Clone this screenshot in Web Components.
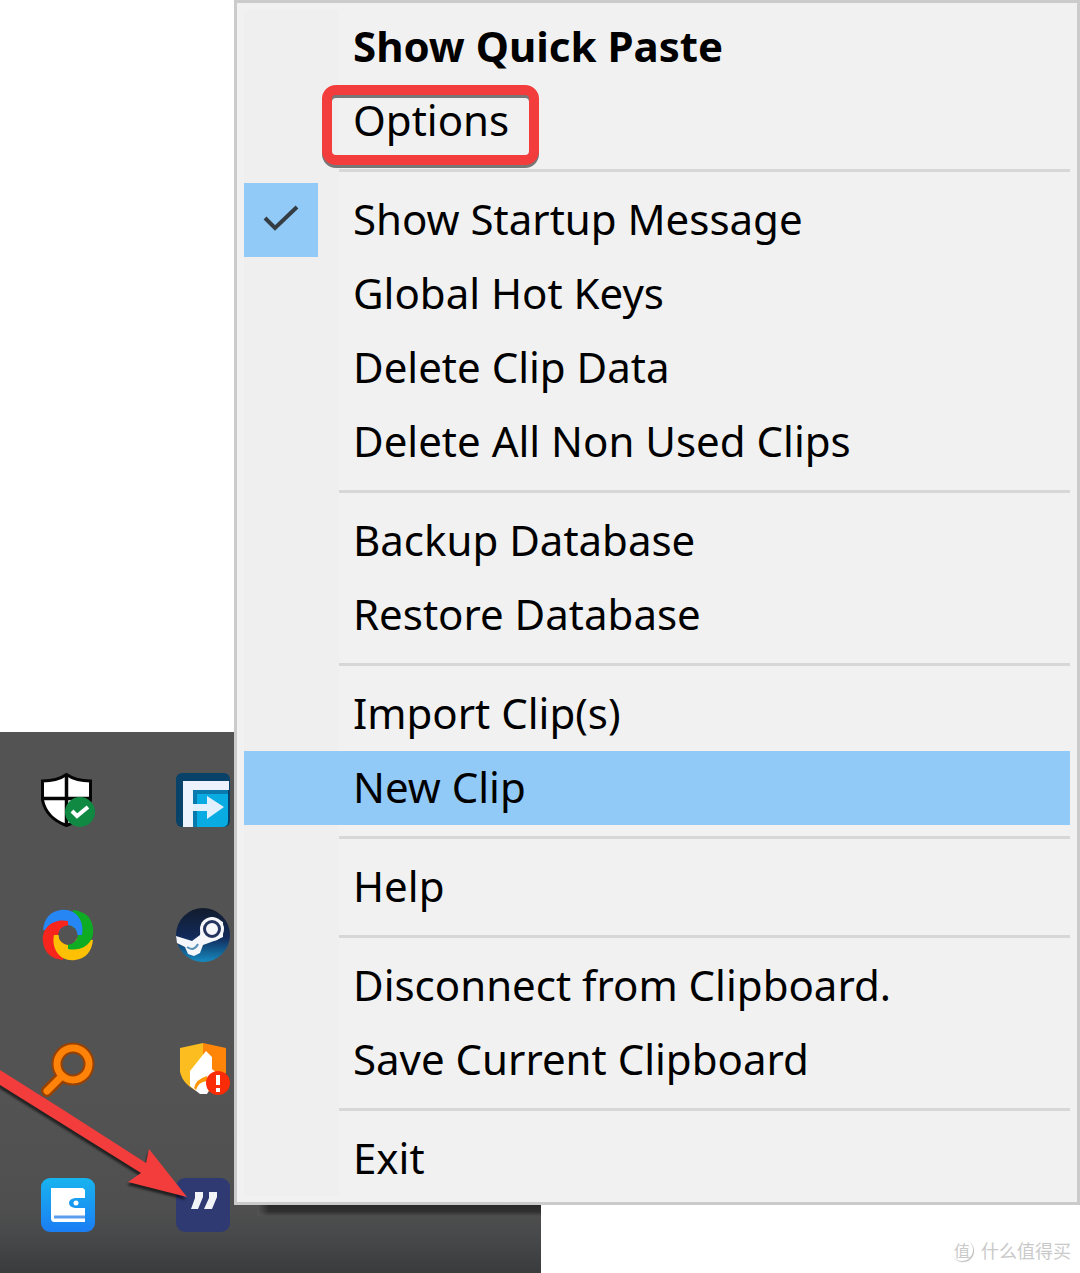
<!DOCTYPE html>
<html lang="en">
<head>
<meta charset="utf-8">
<title>Tray menu</title>
<style>
body { margin: 0; background: #fff; font-family: "Noto Sans", "Noto Sans CJK SC", sans-serif; }
</style>
</head>
<body>
<tray-desktop>
  <tray-panel slot="tray">
    <tray-icon name="security" label="Windows Security"></tray-icon>
    <tray-icon name="transfer" label="File transfer"></tray-icon>
    <tray-icon name="swirl" label="Share"></tray-icon>
    <tray-icon name="steam" label="Steam"></tray-icon>
    <tray-icon name="search" label="Search"></tray-icon>
    <tray-icon name="firewall" label="Firewall"></tray-icon>
    <tray-icon name="wallet" label="Wallet"></tray-icon>
    <tray-icon name="quote" label="Clipboard manager"></tray-icon>
  </tray-panel>
  <context-menu slot="menu">
    <menu-entry strong>Show Quick Paste</menu-entry>
    <menu-entry outlined>Options</menu-entry>
    <menu-line></menu-line>
    <menu-entry checked>Show Startup Message</menu-entry>
    <menu-entry>Global Hot Keys</menu-entry>
    <menu-entry>Delete Clip Data</menu-entry>
    <menu-entry>Delete All Non Used Clips</menu-entry>
    <menu-line></menu-line>
    <menu-entry>Backup Database</menu-entry>
    <menu-entry>Restore Database</menu-entry>
    <menu-line></menu-line>
    <menu-entry>Import Clip(s)</menu-entry>
    <menu-entry active>New Clip</menu-entry>
    <menu-line></menu-line>
    <menu-entry>Help</menu-entry>
    <menu-line></menu-line>
    <menu-entry>Disconnect from Clipboard.</menu-entry>
    <menu-entry>Save Current Clipboard</menu-entry>
    <menu-line></menu-line>
    <menu-entry>Exit</menu-entry>
  </context-menu>
  <site-mark slot="mark">什么值得买</site-mark>
</tray-desktop>
<script>
function define(name, html, setup) {
  const template = document.createElement('template');
  template.innerHTML = html;
  customElements.define(name, class extends HTMLElement {
    constructor() {
      super();
      this.attachShadow({ mode: 'open' }).append(template.content.cloneNode(true));
    }
    connectedCallback() { if (setup) setup(this, this.shadowRoot); }
  });
}

define('tray-desktop', `
<style>
  :host { display: grid; min-height: 100vh; overflow: hidden; }
  ::slotted(*) { grid-area: 1 / 1; }
  ::slotted([slot=tray]) { align-self: end; width: 541px; }
  ::slotted([slot=menu]) { align-self: start; margin-left: 234px; z-index: 1; }
  ::slotted([slot=mark]) { align-self: end; justify-self: end; }
</style>
<slot name="tray"></slot><slot name="menu"></slot><slot name="mark"></slot>`);

define('tray-panel', `
<style>
  :host { display: block; position: relative; box-sizing: border-box; padding: 41px;
    background: linear-gradient(#535353 0 68%, #4f4f4f 88%, #48494a 93%, #3a3b3d 100%); }
  .icons { display: grid; grid-template-columns: 54px 54px; gap: 81px; }
  .arrow { position: absolute; left: 0; top: 330px; filter: drop-shadow(-1px 3px 1px #0009); }
</style>
<div class="icons"><slot></slot></div>
<svg class="arrow" width="200" height="150" viewBox="0 1061 200 150" aria-hidden="true">
  <path fill="#f33c3c" d="M0 1069 65 1110 146 1162 149 1148 187 1196 128 1181 141 1172 0 1084Z"/>
</svg>`);

const icons = {
  security: `
    <path d="M25.500 1.500C19 6 10 8 1.500 8V27C4 39 13 48 25.500 52.500 38 48 47 39 49.500 27V8C41 8 32 6 25.500 1.500Z" fill="#fff" stroke="#050505" stroke-width="3"/>
    <path d="M25.500 1V53M1 25.500H50" stroke="#050505" stroke-width="3.500"/>
    <circle cx="39" cy="39" r="15" fill="#108a43"/>
    <path d="M31 38 36 43 47 34" fill="none" stroke="#fff" stroke-width="4"/>`,
  transfer: `
    <rect width="54" height="54" rx="6" fill="#084269"/>
    <path d="M17 17H52V48Q52 54 46 54H17Z" fill="#08ace3"/>
    <path d="M17 17H52V21H21V54H17Z" fill="#087aae"/>
    <path d="M7 8H53V17H17V54H7Z" fill="#edf3fc"/>
    <path d="M17 31H31V23L48 34 31 46V38H17Z" fill="#e2effc"/>`,
  swirl: `
    <defs>
      <path id="blade" d="M2 22Q4 4 20 2C34 0 44 12 41 27L36 27A9.500 9.500 0 0 0 27 17L20 24Z"/>
      <clipPath id="low"><rect y="30" width="54" height="24"/></clipPath>
    </defs>
    <use href="#blade" transform="rotate(90 27 27)" fill="#0eac22"/>
    <use href="#blade" fill="#2686f4"/>
    <use href="#blade" transform="rotate(-90 27 27)" fill="#f8251d"/>
    <use href="#blade" transform="rotate(180 27 27)" fill="#fdc004"/>
    <g clip-path="url(#low)"><use href="#blade" transform="rotate(90 27 27)" fill="#0eac22"/></g>
    <circle cx="27" cy="27" r="9.500" fill="#535353"/>`,
  steam: `
    <defs><linearGradient id="g" x2="0" y2="1"><stop stop-color="#111b2c"/><stop offset=".55" stop-color="#122a5b"/><stop offset="1" stop-color="#168bc0"/></linearGradient></defs>
    <circle cx="27" cy="27" r="27" fill="url(#g)"/>
    <path d="M0 28 16 33 24 27 25 18 36 9 47 14 47 29 38 33 27 37 24 45 18 48 12 46 9 39 1 35Z" fill="#f5f7fb"/>
    <circle cx="36" cy="21" r="12" fill="#f5f7fb"/>
    <circle cx="36" cy="21" r="7.500" fill="#f5f7fb" stroke="#24345e" stroke-width="3"/>
    <path d="M11 39Q18 44 22 36" fill="none" stroke="#5a91b5" stroke-width="2"/>`,
  search: `
    <g fill="none" stroke-linecap="round"><path d="M20 34 6 48" stroke="#984100" stroke-width="12"/>
    <circle cx="32" cy="21" r="16" stroke="#984100" stroke-width="11"/>
    <path d="M20 34 6 48" stroke="#ff8308" stroke-width="7"/>
    <circle cx="32" cy="21" r="16" stroke="#ff8308" stroke-width="7"/></g>`,
  firewall: `
    <path d="M27 0 4 5V29Q7 43 27 51Z" fill="#fbbd20"/>
    <path d="M27 0 50 5V29Q46 44 27 51Z" fill="#ff8508"/>
    <path d="M30 8 36 14V26L42 31 31 51H24L14 43V28Z" fill="#fff"/>
    <path d="M18 45Q20 36 31 33V38Q22 39 20 47Z" fill="#ff9808"/>
    <circle cx="42" cy="40" r="12" fill="#fa2c08"/>
    <path d="M42 32V42M42 45V49" stroke="#fff" stroke-width="4"/>`,
  wallet: `
    <defs><linearGradient id="g" x2="0" y2="1"><stop stop-color="#18b4ef"/><stop offset="1" stop-color="#1b7df4"/></linearGradient></defs>
    <rect width="54" height="54" rx="9" fill="url(#g)"/>
    <path d="M10 10H42L44 12V20H34Q28 21 28 25 28 29 34 30H44V44H13Q10 44 10 40Z" fill="#fff"/>
    <path d="M13 39H44" stroke="#5a9eed" stroke-width="3"/>
    <circle cx="35" cy="25" r="2.500" fill="#fff"/>`,
  quote: `
    <rect width="54" height="54" rx="9" fill="#303a72"/>
    <path d="M19 14H27V19L22 31H15L19 20ZM33 14H41V19L36 31H28L33 20Z" fill="#f3f4f8"/>`
};

define('tray-icon', `
<style>
  :host { display: block; width: 54px; height: 54px; }
  button { display: block; width: 100%; height: 100%; padding: 0; border: 0; background: none; }
  svg { display: block; overflow: visible; }
</style>
<button type="button"><svg width="54" height="54" viewBox="0 0 54 54" aria-hidden="true"></svg></button>`,
(host, root) => {
  root.querySelector('button').setAttribute('aria-label', host.getAttribute('label'));
  root.querySelector('svg').innerHTML = icons[host.getAttribute('name')];
});

define('context-menu', `
<style>
  :host { display: block; position: relative; border: 3px solid #cbcbcb; background: #f1f1f1; }
  .list { position: relative; padding: 7px 7px 6px;
    background: linear-gradient(#efefef, #efefef) 7px 7px / 95px calc(100% - 13px) no-repeat #f1f1f1; }
  .shade { position: absolute; left: 20px; top: 100%; width: 284px; height: 11px; margin-top: 3px;
    background: linear-gradient(90deg, #535353, #53535300 12px), linear-gradient(#292929, #303030 60%, #30303000); }
</style>
<div class="shade"></div>
<div class="list" role="menu"><slot></slot></div>`);

define('menu-line', `
<style>
  :host { display: block; padding: 11px 0 11px 95px; }
  hr { margin: 0; border: 0; height: 3px; background: #d7d7d7; }
</style>
<hr>`);

define('menu-entry', `
<style>
  :host { display: block; }
  button { display: flex; align-items: flex-start; width: 100%; height: 74px; margin: 0; padding: 0; border: 0;
    background: none; color: #000; font: inherit; font-size: 42px; line-height: 71px; text-align: left; white-space: nowrap; }
  .state { flex: none; display: grid; place-items: center; width: 74px; height: 74px; margin-right: 35px; }
  .state svg { display: none; }
  :host([checked]) .state { background: #91c9f7; }
  :host([checked]) .state svg { display: block; }
  :host([active]) button { background: #91c9f7; }
  :host([strong]) button { font-weight: 700; }
  .label { position: relative; }
  :host([outlined]) .label::after { content: ""; position: absolute; inset: 1px -30px -10px -31px;
    border: 10px solid #f33c3c; border-radius: 14px; filter: drop-shadow(0 3px 0 #777); }
</style>
<button type="button">
  <span class="state"><svg width="38" height="30" viewBox="0 0 38 30" aria-hidden="true"><path d="M3 13 13 23 35 2" fill="none" stroke="#343d44" stroke-width="4"/></svg></span>
  <span class="label"><slot></slot></span>
</button>`,
(host, root) => {
  const button = root.querySelector('button');
  const tick = host.hasAttribute('checked');
  button.setAttribute('role', tick ? 'menuitemcheckbox' : 'menuitem');
  if (tick) button.setAttribute('aria-checked', 'true');
});

define('site-mark', `
<style>
  :host { display: flex; align-items: center; gap: 8px; padding: 0 9px 10px 0; color: #c9c9c9;
    font-family: "Noto Sans CJK SC", sans-serif; font-size: 18px; line-height: 26px; }
  .seal { width: 22px; height: 22px; border-radius: 50%; box-shadow: 1px 1px 1px #bbb;
    font-size: 16px; line-height: 22px; text-align: center; }
</style>
<span class="seal">值</span><span><slot></slot></span>`);
</script>
</body>
</html>
